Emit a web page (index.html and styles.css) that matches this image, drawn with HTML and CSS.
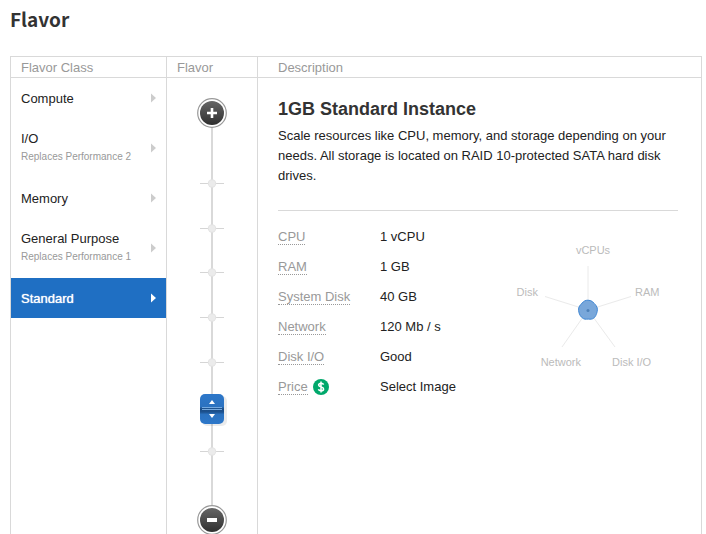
FILE: index.html
```html
<!DOCTYPE html>
<html lang="en">
<head>
<meta charset="utf-8">
<title>Flavor</title>
<link rel="stylesheet" href="styles.css">
</head>
<body>
<main class="page">
  <h1 class="page-title">Flavor</h1>
  <div class="picker">
    <section class="column">
      <h2 class="column-head" id="class-head">Flavor Class</h2>
      <nav class="classes" aria-labelledby="class-head">
        <button type="button" class="class-item"><span class="class-text">Compute</span><svg class="arrow" viewBox="0 0 5 10"><path d="M0 0.5L5 5L0 9.5z"/></svg></button>
        <button type="button" class="class-item"><span class="class-text">I/O<small class="class-note">Replaces Performance 2</small></span><svg class="arrow" viewBox="0 0 5 10"><path d="M0 0.5L5 5L0 9.5z"/></svg></button>
        <button type="button" class="class-item"><span class="class-text">Memory</span><svg class="arrow" viewBox="0 0 5 10"><path d="M0 0.5L5 5L0 9.5z"/></svg></button>
        <button type="button" class="class-item"><span class="class-text">General Purpose<small class="class-note">Replaces Performance 1</small></span><svg class="arrow" viewBox="0 0 5 10"><path d="M0 0.5L5 5L0 9.5z"/></svg></button>
        <button type="button" class="class-item selected" aria-pressed="true"><span class="class-text">Standard</span><svg class="arrow" viewBox="0 0 5 10"><path d="M0 0.5L5 5L0 9.5z"/></svg></button>
      </nav>
    </section>

    <section class="column">
      <h2 class="column-head"><label for="flavor-size">Flavor</label></h2>
      <div class="slider">
        <button type="button" class="step" aria-label="Larger flavor">
          <svg viewBox="0 0 30 30">
            <defs><linearGradient id="knob" x1="0" y1="0" x2="0" y2="1"><stop offset="0" stop-color="#666"/><stop offset="1" stop-color="#2f2f2f"/></linearGradient></defs>
            <circle cx="15" cy="15" r="14.3" fill="#fff" stroke="#999" stroke-width="1.2"/>
            <circle cx="15" cy="15" r="12" fill="url(#knob)"/>
            <path d="M10 15H20M15 10V20" stroke="#fff" stroke-width="2.6"/>
          </svg>
        </button>
        <div class="track">
          <svg viewBox="0 0 40 377">
            <defs>
              <linearGradient id="grip" x1="0" y1="0" x2="0" y2="1"><stop offset="0" stop-color="#2d77c9"/><stop offset=".42" stop-color="#2b72c0"/><stop offset=".5" stop-color="#1b4c84"/><stop offset=".6" stop-color="#1c518e"/><stop offset=".68" stop-color="#2b72c0"/><stop offset="1" stop-color="#2d77c9"/></linearGradient>
              <g id="tick"><path d="M8 0H32" stroke="#d5d5d5" stroke-width="1"/><circle cx="20" cy="0" r="4.2" fill="#e3e3e3"/><circle cx="20" cy="0" r="3.2" fill="#ebebeb"/></g>
            </defs>
            <path d="M20 0V377" stroke="#d9d9d9" stroke-width="2"/>
            <use href="#tick" y="55.5"/><use href="#tick" y="100.5"/><use href="#tick" y="144.5"/><use href="#tick" y="189.5"/><use href="#tick" y="234.5"/><use href="#tick" y="323.5"/>
            <rect x="10" y="268" width="25" height="30" rx="5" fill="#000" opacity=".08"/>
            <rect x="8" y="266" width="24" height="30" rx="5" fill="url(#grip)"/>
            <path d="M10 279.5H30M10 281.5H30" stroke="#74a9e0"/>
            <path d="M17 276L20 272L23 276zM17 286L20 290L23 286z" fill="#fff"/>
          </svg>
          <input class="range" id="flavor-size" type="range" min="0" max="8" value="2">
        </div>
        <button type="button" class="step" aria-label="Smaller flavor">
          <svg viewBox="0 0 30 30">
            <circle cx="15" cy="15" r="14.3" fill="#fff" stroke="#999" stroke-width="1.2"/>
            <circle cx="15" cy="15" r="12" fill="url(#knob)"/>
            <path d="M10 15H20" stroke="#fff" stroke-width="4"/>
          </svg>
        </button>
      </div>
    </section>

    <section class="column">
      <h2 class="column-head description-head">Description</h2>
      <div class="description">
        <h3 class="instance">1GB Standard Instance</h3>
        <p class="summary">Scale resources like CPU, memory, and storage depending on your needs. All storage is located on RAID 10-protected SATA hard disk drives.</p>
        <div class="details">
          <table class="specs">
            <tr><th scope="row"><span class="term">CPU</span></th><td>1 vCPU</td></tr>
            <tr><th scope="row"><span class="term">RAM</span></th><td>1 GB</td></tr>
            <tr><th scope="row"><span class="term">System Disk</span></th><td>40 GB</td></tr>
            <tr><th scope="row"><span class="term">Network</span></th><td>120 Mb / s</td></tr>
            <tr><th scope="row"><span class="term">Disk I/O</span></th><td>Good</td></tr>
            <tr><th scope="row"><span class="price"><span class="term">Price</span><svg class="dollar" viewBox="0 0 16 16"><circle cx="8" cy="8" r="8" fill="#00a86b"/><path d="M10.6 5.6C10.2 4.7 9.3 4.3 8.1 4.3C6.6 4.3 5.6 5 5.6 6.1C5.6 8.5 10.6 7.3 10.6 9.9C10.6 11.1 9.5 11.8 8 11.8C6.6 11.8 5.7 11.2 5.4 10.2M8 2.6V13.4" fill="none" stroke="#fff" stroke-width="1.5"/></svg></span></th><td>Select Image</td></tr>
          </table>
          <svg class="radar" viewBox="0 0 164 150" role="img" aria-label="Relative resources">
            <path d="M74 80V36M74 80L117 66.5M74 80L101 117M74 80L48 117M74 80L31 66.5" fill="none" stroke="#eaeaea"/>
            <path d="M74 70.2C78.5 70.2 79.7 73.2 81.8 75.2C84 77.7 83.5 80.7 82.7 83.3C81.6 86.7 79.8 89.4 76 89.2C73.5 88.8 71.5 89.7 69.5 88.7C66.6 87 65 84.3 64.6 80.5C64.2 76.5 66.3 75.2 68.2 73C69.6 71.2 71.3 70.2 74 70.2Z" fill="#79a7da" stroke="#3f86d3"/>
            <circle cx="74" cy="80.5" r="1.5" fill="#4d80b8"/>
            <g class="radar-label">
              <text x="79" y="24" text-anchor="middle">vCPUs</text>
              <text x="121" y="66">RAM</text>
              <text x="98" y="136">Disk I/O</text>
              <text x="67" y="136" text-anchor="end">Network</text>
              <text x="24" y="66" text-anchor="end">Disk</text>
            </g>
          </svg>
        </div>
      </div>
    </section>
  </div>
</main>
</body>
</html>
```
FILE: styles.css
```css
* { box-sizing: border-box; }

body {
  margin: 0;
  height: 100vh;
  overflow: hidden;
  background: #fff;
  color: #222;
  font: 13px/20px "Liberation Sans", Arial, sans-serif;
}

.page { padding: 4px 4px 0 10px; }

.page-title {
  margin: 0 0 22px;
  color: #333;
  font: bold 19px/30px "Noto Sans CJK SC", "Noto Sans", sans-serif;
}

.picker {
  display: grid;
  grid-template-columns: 155px 91px 1fr;
  border: 1px solid #d9d9d9;
}

.column { min-width: 0; }
.column + .column { border-left: 1px solid #d9d9d9; }

.column-head {
  margin: 0;
  height: 21px;
  padding: 0 10px;
  border-bottom: 1px solid #d9d9d9;
  color: #999;
  font-size: 13px;
  font-weight: normal;
  line-height: 21px;
}

.description-head { padding-left: 20px; }

button {
  border: 0;
  background: none;
  color: inherit;
  font: inherit;
  cursor: pointer;
}

.classes { display: flex; flex-direction: column; }

.class-item {
  display: flex;
  align-items: center;
  justify-content: space-between;
  padding: 10px;
  text-align: left;
}

.class-text { padding-top: 2px; line-height: 18px; }

.class-note {
  display: block;
  padding-bottom: 2px;
  color: #999;
  font-size: 10px;
  line-height: 18px;
}

.arrow { width: 5px; height: 10px; fill: #ccc; }

.selected { background: #1f6fc3; color: #fff; text-shadow: 0 0 1px #fff; }
.selected .arrow { fill: #fff; }

.slider {
  display: flex;
  flex-direction: column;
  align-items: center;
  padding-top: 20px;
}

.step { width: 30px; height: 30px; padding: 0; }
.slider svg { display: block; width: 100%; }
.track { position: relative; width: 40px; }

.range {
  position: absolute;
  inset: 0;
  width: 100%;
  height: 100%;
  margin: 0;
  opacity: 0;
  writing-mode: vertical-lr;
  direction: rtl;
}

.description { padding: 20px 23px 20px 20px; }

.instance {
  margin: 0 0 6px;
  color: #333;
  font-size: 18px;
  line-height: 22px;
}

.summary {
  margin: 0;
  padding-bottom: 24px;
  border-bottom: 1px solid #d9d9d9;
}

.details {
  display: flex;
  justify-content: space-between;
  padding-top: 11px;
}

.specs { border-collapse: collapse; }
.specs th, .specs td { height: 30px; padding: 0; text-align: left; vertical-align: middle; }
.specs th { width: 102px; color: #999; font-weight: normal; }
.term { display: inline-block; border-bottom: 1px dotted #999; line-height: 14px; }
.price { display: flex; align-items: center; gap: 5px; }
.dollar { width: 16px; height: 16px; }

.radar { width: 164px; height: 150px; margin-top: 8px; }
.radar-label { fill: #bbb; font-size: 11px; }
```
